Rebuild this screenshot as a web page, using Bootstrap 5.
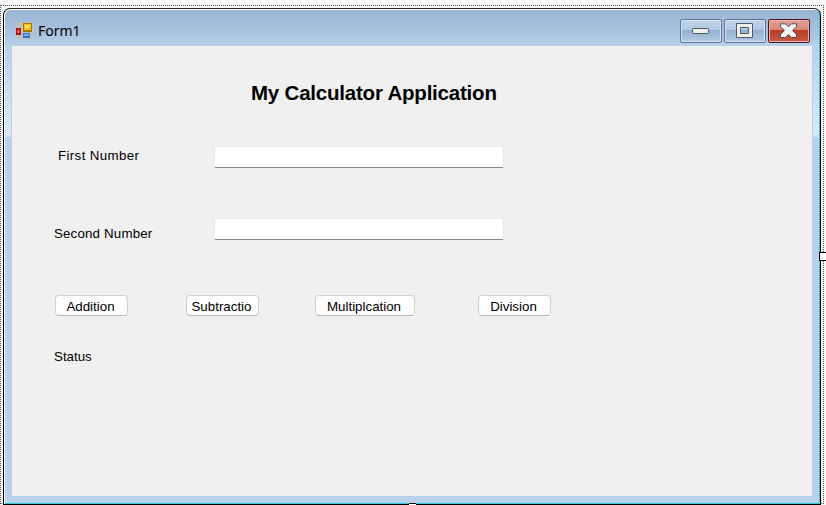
<!DOCTYPE html>
<html lang="en">
<head>
<meta charset="utf-8">
<title>Form1</title>
<link href="https://cdn.jsdelivr.net/npm/bootstrap@5.3.0/dist/css/bootstrap.min.css" rel="stylesheet">
<style>
body{width:826px;height:505px;background:#f6f6f6;font:13.33px/16px "Liberation Sans",Arial,sans-serif;color:#000}
.designer{width:824px;height:499px;margin-top:5px;border:1px dotted #555;padding:2px 2px 0}
.form-window{width:818px;height:497px;border:1px solid #000;border-top-color:#222;border-radius:7px 7px 0 0;
 background:linear-gradient(#9ab4d1,#a9c2de 24px,#b9d1ea 37px,#b9d1ea);
 box-shadow:inset 1px 1px 0 #fff,inset -1px -1px 0 #35c5e2}
.titlebar{height:37px;padding:0 10px 0 12px}
.caption-text{font:14px/18px "Noto Sans","Open Sans",sans-serif;margin:1px 0 0 5px}
.caption-buttons{gap:2px;padding-top:10px}
.client-row{padding:0 7px 0 1px;height:450px}
.frame-glow{width:6px;height:91px;margin-right:1px;background:linear-gradient(#b9d1ea,#dce8f5 88px,#cbdcef)}
.frame-glow.glow-right{margin:0 0 0 1px}
.client-area{width:800px;height:450px;background:#f0f0f0;padding:35px 0 0 42px}
.caption-btn{width:42px;height:24px;border:1px solid #5d7496;border-radius:2px;
 background:linear-gradient(#bfd3ea,#b2c9e3 45%,#94b0cf 46%,#b1cbe5);box-shadow:inset 0 0 0 1px #d5e3f3}
.caption-close{border-color:#47151f;background:linear-gradient(#e5a095,#d98578 45%,#b93b26 46%,#c75b49);box-shadow:inset 0 0 0 1px #eab5ad}
.app-title{font-size:20.5px;line-height:24px;font-weight:700;letter-spacing:-.21px;width:250px;margin-left:197px;white-space:nowrap}
.field-row{height:22px}
.field-name{width:160px}
.form-control.entry{width:290px;height:22px;padding:0 3px;border:1px solid #e8e8e8;border-bottom-color:#858585;border-radius:2px;background:#fff;font-size:13px}
.btn.op-btn{width:73px;height:21px;padding:1px 2px 0 0;border:1px solid #d0d0d0;border-bottom-color:#b8b8b8;border-radius:4px;background:#fdfdfd;font-size:13.33px;line-height:19px;color:#000;white-space:nowrap}
.btn.op-wide{width:100px}
.first-row{margin-top:41px}
.first-row .field-name{padding:2px 0 0 4px;letter-spacing:.36px}
.second-row{margin-top:50px}
.second-row .field-name{padding-top:8px;letter-spacing:.16px}
.ops{margin:55px 0 0 1px}
.op-sub{margin-left:58px}
.op-wide{margin-left:56px}
.op-div{margin-left:63px}
.status-text{margin-top:33px}
.handle-right{left:819px;top:252px;width:8px;height:9px;border:1px solid #000;background:#fff}
.handle-bottom{left:409px;top:503px;width:7px;height:2px;border-top:1px solid #000;background:#fff}
</style>
<script src="https://cdn.jsdelivr.net/npm/bootstrap@5.3.0/dist/js/bootstrap.bundle.min.js"></script>
</head>
<body class="position-relative overflow-hidden">
<div class="designer">
 <main class="form-window overflow-hidden">
  <header class="titlebar d-flex justify-content-between">
   <div class="d-flex pt-2 mt-1">
    <svg width="17" height="18" viewBox="0 0 17 18" shape-rendering="crispEdges">
     <path fill="#bfc0c1" d="M-1 1h18v17h-18z"/>
     <path fill="#a51410" d="M0 7h5v7H0z"/><path fill="#dd3024" d="M1 8h3v4H1z"/><path fill="#ffb4a5" d="M2 10h1v2H2z"/>
     <path fill="#a87500" d="M7 2h9v9H7z"/><path fill="#f4c21c" d="M8 3h7v6H8z"/><path fill="#ffdf70" d="M9 4h4v3H9z"/>
     <path fill="#3f73c8" d="M7 12h7v5H7z"/><path fill="#79a8ee" d="M8 13h5v2H8z"/>
    </svg>
    <span class="caption-text">Form1</span>
   </div>
   <div class="caption-buttons d-flex">
    <span class="caption-btn d-flex align-items-center justify-content-center"><svg width="18" height="8" viewBox="0 0 18 8"><rect x=".5" y="1.5" width="16" height="5" rx=".7" fill="#f1f1ec" stroke="#50596b"/></svg></span>
    <span class="caption-btn d-flex align-items-center justify-content-center"><svg width="18" height="16" viewBox="0 0 18 16"><path d="M.5.5h16v14H.5zM4.500 4.500v6h8v-6z" fill="#efefed" fill-rule="evenodd" stroke="#50596b"/></svg></span>
    <span class="caption-btn caption-close d-flex align-items-center justify-content-center"><svg width="18" height="16" viewBox="0 0 18 16"><path d="M.5.8h5l3 3 3-3h5v3L12.500 7.500l4 4v3h-5l-3-3-3 3h-5v-3l4-4-4-3.700z" fill="#f4f4f2" stroke="#50505f"/></svg></span>
   </div>
  </header>
  <div class="client-row d-flex">
   <div class="frame-glow flex-shrink-0"></div>
   <section class="client-area flex-shrink-0">
    <h1 class="app-title mb-0">My Calculator Application</h1>
    <div class="field-row first-row d-flex"><label class="field-name" for="first">First Number</label><input class="form-control entry" id="first"></div>
    <div class="field-row second-row d-flex"><label class="field-name" for="second">Second Number</label><input class="form-control entry" id="second"></div>
    <div class="ops d-flex">
     <button class="btn op-btn">Addition</button><button class="btn op-btn op-sub">Subtractio</button><button class="btn op-btn op-wide">Multiplcation</button><button class="btn op-btn op-div">Division</button>
    </div>
    <div class="status-text">Status</div>
   </section>
   <div class="frame-glow glow-right flex-shrink-0"></div>
  </div>
 </main>
</div>
<span class="handle-right position-absolute"></span>
<span class="handle-bottom position-absolute"></span>
</body>
</html>
